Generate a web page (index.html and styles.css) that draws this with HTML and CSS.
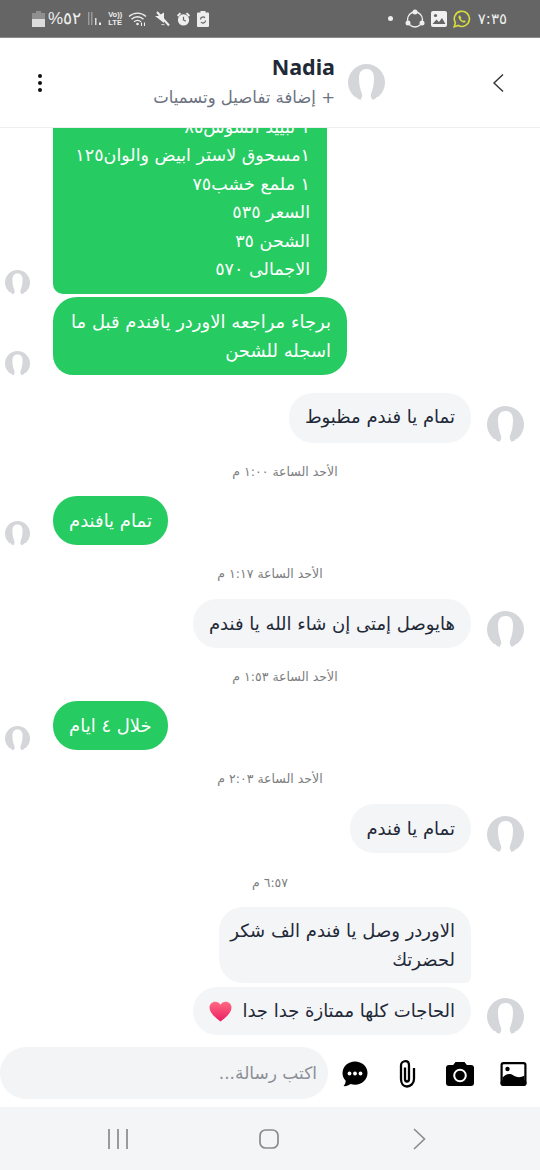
FILE: index.html
```html
<!DOCTYPE html>
<html lang="ar">
<head>
<meta charset="utf-8">
<title>Nadia</title>
<link rel="stylesheet" href="styles.css">
</head>
<body>
<svg class="defs" width="0" height="0" aria-hidden="true">
  <symbol id="avatar" viewBox="0 0 37 37">
    <circle cx="18.5" cy="18.5" r="18.500" fill="#d4d6da"/>
    <path d="M18.5 5C13 5 11 9 11 14c0 6 1 10 2 13 1 3 2 5 .5 7L12 37h13l-1.500-3c-1.500-2-.5-4 .5-7 1-3 2-7 2-13 0-5-2-9-7.500-9z" fill="#fff"/>
    <path d="M0 31.500c3.500 3 7 2.500 9 1.500l-1.500 4H0zM37 31.500c-3.500 3-7 2.500-9 1.500l1.500 4H37z" fill="#fff"/>
  </symbol>
</svg>

<div class="status">
  <div class="status-group">
    <svg class="st-batt" width="13" height="16" viewBox="0 0 13 16"><path d="M4 0h5v2h4v14H0V2h4z" fill="#8f8f8f"/><path d="M0 8h13v8H0z" fill="#dcdcdc"/></svg>
    <span class="st-text st-pct">%٥٢</span>
    <svg class="st-sig" width="15" height="15" viewBox="0 0 15 15"><path d="M1 1h1.500v13H1zM4 1h1.500v13H4z" fill="#9a9a9a"/><path d="M8 7h1.500v7H8z" fill="#ddd"/><path d="M12 11.500h2V14h-2z" fill="#eee"/></svg>
    <span class="st-volte">Vo))<br>LTE</span>
    <svg class="st-wifi" width="20" height="16" viewBox="0 0 20 16" fill="none" stroke="#eee" stroke-width="1.400"><path d="M1 5.500C6 1 13 1 18 5.500M3.500 8.200C7 5 12 5 15.500 8.200M6 10.800c2-1.600 5-1.600 7 0"/><path d="M13.500 15v-3.500M16.500 15v-3.500" stroke-width="1.100"/><circle cx="9.500" cy="13" r="1.300" fill="#eee" stroke="none"/></svg>
    <svg class="st-mute" width="16" height="16" viewBox="0 0 16 16"><path d="M1 5h3l6-3.500V12z" fill="#eee"/><path d="M3 1l12 13.500" stroke="#eee" stroke-width="2"/><path d="M7 13c1 1.500 3 1.500 4 .5z" fill="#eee"/></svg>
    <svg class="st-alarm" width="15" height="16" viewBox="0 0 16 16"><circle cx="8" cy="9" r="6" fill="#eee"/><path d="M1 4l3-3 1.500 1.500-3 3zM15 4l-3-3-1.500 1.500 3 3z" fill="#eee"/><path d="M8 5.500V9l2.500 1.500" stroke="#666" stroke-width="1.300" fill="none"/></svg>
    <svg class="st-save" width="12" height="16" viewBox="0 0 12 16"><path d="M3.500 0h5v1.500H11a1 1 0 0 1 1 1V15a1 1 0 0 1-1 1H1a1 1 0 0 1-1-1V2.500a1 1 0 0 1 1-1h2.500z" fill="#eee"/><path d="M3.500 8.500a2.500 2.500 0 0 1 4.500-1.500M8.500 9.500a2.500 2.500 0 0 1-4.500 1.500" stroke="#666" stroke-width="1.200" fill="none"/></svg>
  </div>
  <div class="status-group status-right">
    <span class="st-dot"></span>
    <svg width="20" height="20" viewBox="0 0 20 20"><circle cx="10" cy="10.500" r="7.500" fill="none" stroke="#eee" stroke-width="1.300"/><circle cx="10" cy="3" r="2.500" fill="#eee"/><circle cx="3" cy="14" r="2.500" fill="#eee"/><circle cx="17" cy="14" r="2.500" fill="#eee"/></svg>
    <svg width="16" height="16" viewBox="0 0 16 16"><rect width="16" height="16" rx="2" fill="#f0f0f0"/><circle cx="4.500" cy="4.500" r="1.600" fill="#666"/><path d="M1.500 13l4-4.500 2.500 2.500 3-4 3.500 6z" fill="#666"/></svg>
    <svg width="18" height="18" viewBox="0 0 19 19"><path d="M1.300 17.700l1.200-4.300a8 8 0 1 1 3 2.900z" fill="none" stroke="#d8dd3e" stroke-width="1.700"/><path d="M7 5.500c-1 .5-1.500 1.500-1 3 .7 2.200 2.500 4 4.800 4.700 1.300.4 2.300-.2 2.700-1.200l-2-1.200-.9.800c-1-.4-2-1.400-2.500-2.500l.8-.9z" fill="#d8dd3e"/></svg>
    <span class="st-text st-time">٧:٣٥</span>
  </div>
</div>

<header class="head">
  <svg class="dots" width="6" height="20" viewBox="0 0 6 20"><circle cx="3" cy="3" r="2"/><circle cx="3" cy="10" r="2"/><circle cx="3" cy="17" r="2"/></svg>
  <div class="head-info">
    <div class="head-name">Nadia</div>
    <div class="head-sub" dir="rtl">+ إضافة تفاصيل وتسميات</div>
  </div>
  <svg class="avatar head-avatar"><use href="#avatar"/></svg>
  <svg class="back" width="12" height="20" viewBox="0 0 12 20"><path d="M11 1.500L2 10l9 8.500" fill="none" stroke="#333" stroke-width="1.400"/></svg>
</header>

<main class="chat">
  <div class="row row-out">
    <svg class="avatar-sm"><use href="#avatar"/></svg>
    <div class="bubble out bubble-first" dir="rtl">١ تبييد السوس٨٥<br>١مسحوق لاستر ابيض والوان١٢٥<br>١ ملمع خشب٧٥<br>السعر ٥٣٥<br>الشحن ٣٥<br>الاجمالى ٥٧٠</div>
  </div>
  <div class="row row-out tight">
    <svg class="avatar-sm"><use href="#avatar"/></svg>
    <div class="bubble out bubble-wide" dir="rtl">برجاء مراجعه الاوردر يافندم قبل ما اسجله للشحن</div>
  </div>
  <div class="row row-in after-group">
    <div class="bubble in bubble-tall" dir="rtl">تمام يا فندم مظبوط</div>
    <svg class="avatar"><use href="#avatar"/></svg>
  </div>
  <div class="time time-shift">الأحد الساعة ١:٠٠ م</div>
  <div class="row row-out">
    <svg class="avatar-sm"><use href="#avatar"/></svg>
    <div class="bubble out" dir="rtl">تمام يافندم</div>
  </div>
  <div class="time">الأحد الساعة ١:١٧ م</div>
  <div class="row row-in">
    <div class="bubble in" dir="rtl">هايوصل إمتى إن شاء الله يا فندم</div>
    <svg class="avatar"><use href="#avatar"/></svg>
  </div>
  <div class="time time-shift">الأحد الساعة ١:٥٣ م</div>
  <div class="row row-out">
    <svg class="avatar-sm"><use href="#avatar"/></svg>
    <div class="bubble out" dir="rtl">خلال ٤ ايام</div>
  </div>
  <div class="time">الأحد الساعة ٢:٠٣ م</div>
  <div class="row row-in">
    <div class="bubble in" dir="rtl">تمام يا فندم</div>
    <svg class="avatar"><use href="#avatar"/></svg>
  </div>
  <div class="time time-last">٦:٥٧ م</div>
  <div class="row row-in">
    <div class="bubble in bubble-two" dir="rtl">الاوردر وصل يا فندم الف شكر<br>لحضرتك</div>
    <div class="avatar-gap"></div>
  </div>
  <div class="row row-in tight-last">
    <div class="bubble in bubble-last" dir="rtl">الحاجات كلها ممتازة جدا جدا <svg class="heart" width="23" height="21" viewBox="0 0 24 22"><defs><linearGradient id="hg" x1="0" y1="0" x2="0" y2="1"><stop offset="0" stop-color="#ff6b81"/><stop offset="1" stop-color="#e91e63"/></linearGradient></defs><path d="M12 21.500C5 16 .5 12 .5 6.800.5 3 3.300.7 6.500.7c2.400 0 4.300 1.200 5.500 3.200C13.200 1.900 15.100.7 17.500.7c3.200 0 6 2.300 6 6.100C23.500 12 19 16 12 21.500z" fill="url(#hg)"/></svg></div>
    <svg class="avatar"><use href="#avatar"/></svg>
  </div>
</main>

<div class="composer">
  <div class="input" dir="rtl">اكتب رسالة...</div>
  <div class="tools">
    <svg width="26" height="26" viewBox="0 0 26 26"><path d="M13 .5C6 .5.500 5.600.500 12c0 3 1.200 5.700 3.200 7.700-.1 2-.8 4-2.200 5.400 2.800.2 5.300-.7 7.200-2.100 1.400.5 2.900.8 4.300.8 7 0 12.500-5.300 12.500-11.800S20 .5 13 .5z"/><circle cx="7.500" cy="12.500" r="1.900" fill="#fff"/><circle cx="13" cy="12.500" r="1.900" fill="#fff"/><circle cx="18.500" cy="12.500" r="1.900" fill="#fff"/></svg>
    <svg width="18" height="28" viewBox="0 0 18 28" fill="none" stroke="#000" stroke-width="2.300"><path d="M7 7.500V19c0 1.500.8 2.500 2 2.500s2-1 2-2.500V5.500C11 3 9.800 1.200 7.500 1.200S3 3 3 5.500V19c0 4.500 2.500 7.500 6 7.500s7-3 7-7.500V8"/></svg>
    <svg width="28" height="24" viewBox="0 0 28 24"><path d="M9.500 0h9l2.300 3H25a3 3 0 0 1 3 3v15a3 3 0 0 1-3 3H3a3 3 0 0 1-3-3V6a3 3 0 0 1 3-3h4.200z"/><circle cx="14" cy="13.500" r="5.800" fill="none" stroke="#fff" stroke-width="2"/></svg>
    <svg class="tool-last" width="27" height="24" viewBox="0 0 26 24"><rect width="26" height="24" rx="3"/><rect x="2.200" y="2.200" width="21.600" height="19.600" rx="1" fill="#fff"/><circle cx="7" cy="7" r="2.200"/><path d="M2 21.500v-6c4-3.800 7-4.500 11-2 4 2.300 7 2.300 11 0v8z"/><rect y="18" width="26" height="6" rx="3"/></svg>
  </div>
</div>

<nav class="navbar">
  <svg width="20" height="20" viewBox="0 0 20 20" fill="none" stroke="#8a8a8a" stroke-width="1.700"><path d="M1 0v20M10 0v20M19 0v20"/></svg>
  <svg class="nav-home" width="20" height="20" viewBox="0 0 20 20" fill="none" stroke="#8a8a8a" stroke-width="1.700"><rect x="1" y="1" width="18" height="18" rx="5.500"/></svg>
  <svg width="13" height="22" viewBox="0 0 13 22" fill="none" stroke="#8a8a8a" stroke-width="1.600"><path d="M1 1l10.500 10L1 21"/></svg>
</nav>
</body>
</html>
```
FILE: styles.css
```css
* { box-sizing: border-box; }
html, body { margin: 0; padding: 0; }
body {
  width: 540px;
  height: 1170px;
  overflow: hidden;
  display: flex;
  flex-direction: column;
  background: #fff;
  font-family: "DejaVu Sans", "Noto Sans", sans-serif;
  color: #1f2937;
}
.defs { position: absolute; }

.status {
  height: 38px;
  flex: none;
  background: #656565;
  display: flex;
  align-items: center;
  justify-content: space-between;
  padding: 0 33px 0 32px;
  border-bottom: 1px solid #8a8a8a;
}
.status-group { display: flex; align-items: center; gap: 6px; }
.status-right { gap: 6px; }
.st-text { color: #eee; font-size: 15px; }
.st-pct { font-family: "Liberation Sans", sans-serif; font-size: 17px; margin-left: -3px; }
.st-volte {
  color: #eee;
  font: 700 7.500px/8px "Liberation Sans", sans-serif;
  text-align: center;
}
.st-dot { width: 5px; height: 5px; border-radius: 50%; background: #eee; margin-right: 6px; }
.st-time { font-size: 15px; margin-left: 1px; }

.head {
  height: 90px;
  flex: none;
  display: flex;
  align-items: center;
  padding: 0 36px 0 37px;
  border-bottom: 1px solid #eceef0;
}
.dots { fill: #111; }
.head-info { margin-left: auto; text-align: right; }
.head-name {
  font: 700 21.500px/26px "Noto Sans", sans-serif;
  color: #1f2a37;
  margin-top: -2px;
}
.head-sub { font-size: 16.500px; line-height: 22px; color: #6b7280; margin-top: 7px; }
.head-avatar { margin: 0 107px 0 13px; }
.avatar { width: 37px; height: 37px; flex: none; }
.avatar-sm { width: 25px; height: 25px; flex: none; align-self: flex-end; margin-bottom: -1px; }
.avatar-gap { width: 37px; flex: none; }

.chat {
  flex: 1;
  min-height: 0;
  overflow: hidden;
  display: flex;
  flex-direction: column;
  justify-content: flex-end;
  padding-bottom: 5px;
}
.row { display: flex; align-items: flex-end; flex: none; }
.row-out { padding-left: 5px; gap: 23px; justify-content: flex-start; }
.row-in { padding-right: 16px; gap: 16px; justify-content: flex-end; }
.tight { margin-top: 3px; }
.tight-last { margin-top: 4px; }
.after-group { margin-top: 18px; }
.bubble {
  font-size: 18px;
  line-height: 29px;
  padding: 10px 16px;
  border-radius: 24px;
  text-align: right;
}
.out { background: #26cb62; color: #fff; }
.in { background: #f4f5f7; color: #1f2937; }
.bubble-first {
  width: 274px;
  border-radius: 0 0 24px 10px;
  padding: 0 17px 10px;
  line-height: 28.500px;
  font-size: 17.500px;
}
.bubble-wide { width: 294px; border-radius: 24px 24px 24px 20px; }
.bubble-tall { padding: 9px 16px 12px; }
.bubble-two { width: 252px; border-radius: 24px 24px 6px 24px; padding: 9px 16px 9px 4px; }
.bubble-last { padding: 9px 16px 10px; }
.heart { vertical-align: -5px; margin-right: 5px; }

.time {
  height: 53.500px;
  flex: none;
  display: flex;
  align-items: center;
  justify-content: center;
  padding-top: 4px;
  font-size: 12.500px;
  color: #7b7d80;
  direction: rtl;
}
.time-shift { padding-left: 30px; }
.time-last { height: 54.500px; padding-top: 5px; }

.composer {
  height: 67px;
  flex: none;
  display: flex;
  align-items: center;
  gap: 14px;
}
.input {
  width: 328px;
  height: 52px;
  margin-top: -1px;
  border-radius: 26px;
  background: #f3f4f6;
  color: #8b8f96;
  font-size: 17px;
  line-height: 52px;
  padding: 0 11px;
}
.tools { display: flex; align-items: center; gap: 30px; }
.tool-last { margin-left: -4px; }

.navbar {
  height: 63px;
  flex: none;
  background: #f4f5f7;
  display: flex;
  align-items: center;
  padding: 0 114px 0 108px;
  justify-content: space-between;
}
.nav-home { margin-left: -4px; }
```
